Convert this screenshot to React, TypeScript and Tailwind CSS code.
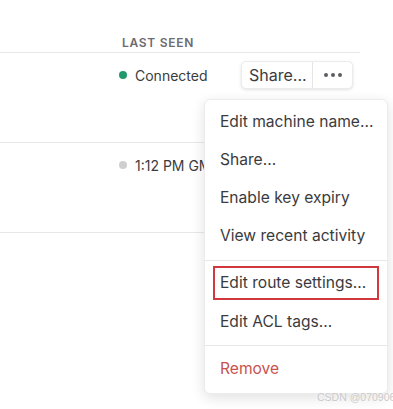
import React from "react";

const menuTop = ["Edit machine name...", "Share...", "Enable key expiry", "View recent activity"];

const App = () => {
  return (
    <div className="relative w-[393px] h-[409px] overflow-hidden bg-white text-[#3b3b3d] font-['Inter','Noto_Sans',sans-serif]">
      <div className="w-[360px]">
        <div className="h-[53px] border-b border-[#e8e8e8] pl-[122px] pt-[29px]">
          <span className="text-[12px] font-semibold tracking-[0.06em] text-[#6c6b70] leading-none">LAST SEEN</span>
        </div>
        <div className="h-[90px] border-b border-[#e8e8e8] pl-[120px] pt-[8px] flex items-start">
          <div className="flex items-center gap-[8px] h-[28px] w-[121px]">
            <span className="w-[8px] h-[8px] rounded-full bg-[#21986d] ml-[-1px]" />
            <span className="text-[14px]">Connected</span>
          </div>
          <div className="flex h-[28px] rounded-[5px] border border-[#ececec] shadow-[0_1px_3px_rgba(0,0,0,0.12)] bg-white">
            <div className="w-[71px] flex items-center pl-[7px] text-[16px] border-r border-[#e6e6e6]">Share...</div>
            <div className="w-[39px] flex items-center justify-center gap-[3px]">
              <span className="w-[4px] h-[4px] rounded-full bg-[#5e5e62]" />
              <span className="w-[4px] h-[4px] rounded-full bg-[#5e5e62]" />
              <span className="w-[4px] h-[4px] rounded-full bg-[#5e5e62]" />
            </div>
          </div>
        </div>
        <div className="h-[90px] border-b border-[#e8e8e8] pl-[120px] pt-[8px]">
          <div className="flex items-center gap-[8px] h-[28px]">
            <span className="w-[8px] h-[8px] rounded-full bg-[#cfcfcf] ml-[-1px]" />
            <div className="w-[69px] overflow-hidden">
              <span className="text-[14px] whitespace-nowrap">1:12 PM GMT+8</span>
            </div>
          </div>
        </div>
      </div>

      <div className="absolute left-[204px] top-[99px] w-[184px] h-[295px] bg-white rounded-[6px] border border-[#ececec] shadow-[0_4px_14px_rgba(0,0,0,0.12)] pt-[3px] text-[15.6px]">
        {menuTop.map((item) => (
          <div key={item} className="h-[38px] flex items-center px-[15px] whitespace-nowrap">
            {item}
          </div>
        ))}
        <div className="h-px bg-[#e8e8e8] mt-[5px] mb-[4px]" />
        <div className="h-[38px] px-[8px] pt-px">
          <div className="h-[34px] border-2 border-[#d2393f] flex items-center px-[5px] whitespace-nowrap">
            Edit route settings...
          </div>
        </div>
        <div className="h-[38px] flex items-center px-[15px] whitespace-nowrap">Edit ACL tags...</div>
        <div className="h-px bg-[#e8e8e8] my-[4px]" />
        <div className="h-[38px] flex items-center px-[15px] text-[#c9524f]">Remove</div>
      </div>

      <div className="absolute left-[317px] top-[392px] whitespace-nowrap text-[10.5px] leading-none text-[#c9c9c9] font-['Liberation_Sans',sans-serif] [text-shadow:0_0_2px_#fff]">
        CSDN @070906
      </div>
    </div>
  );
};

export default App;
